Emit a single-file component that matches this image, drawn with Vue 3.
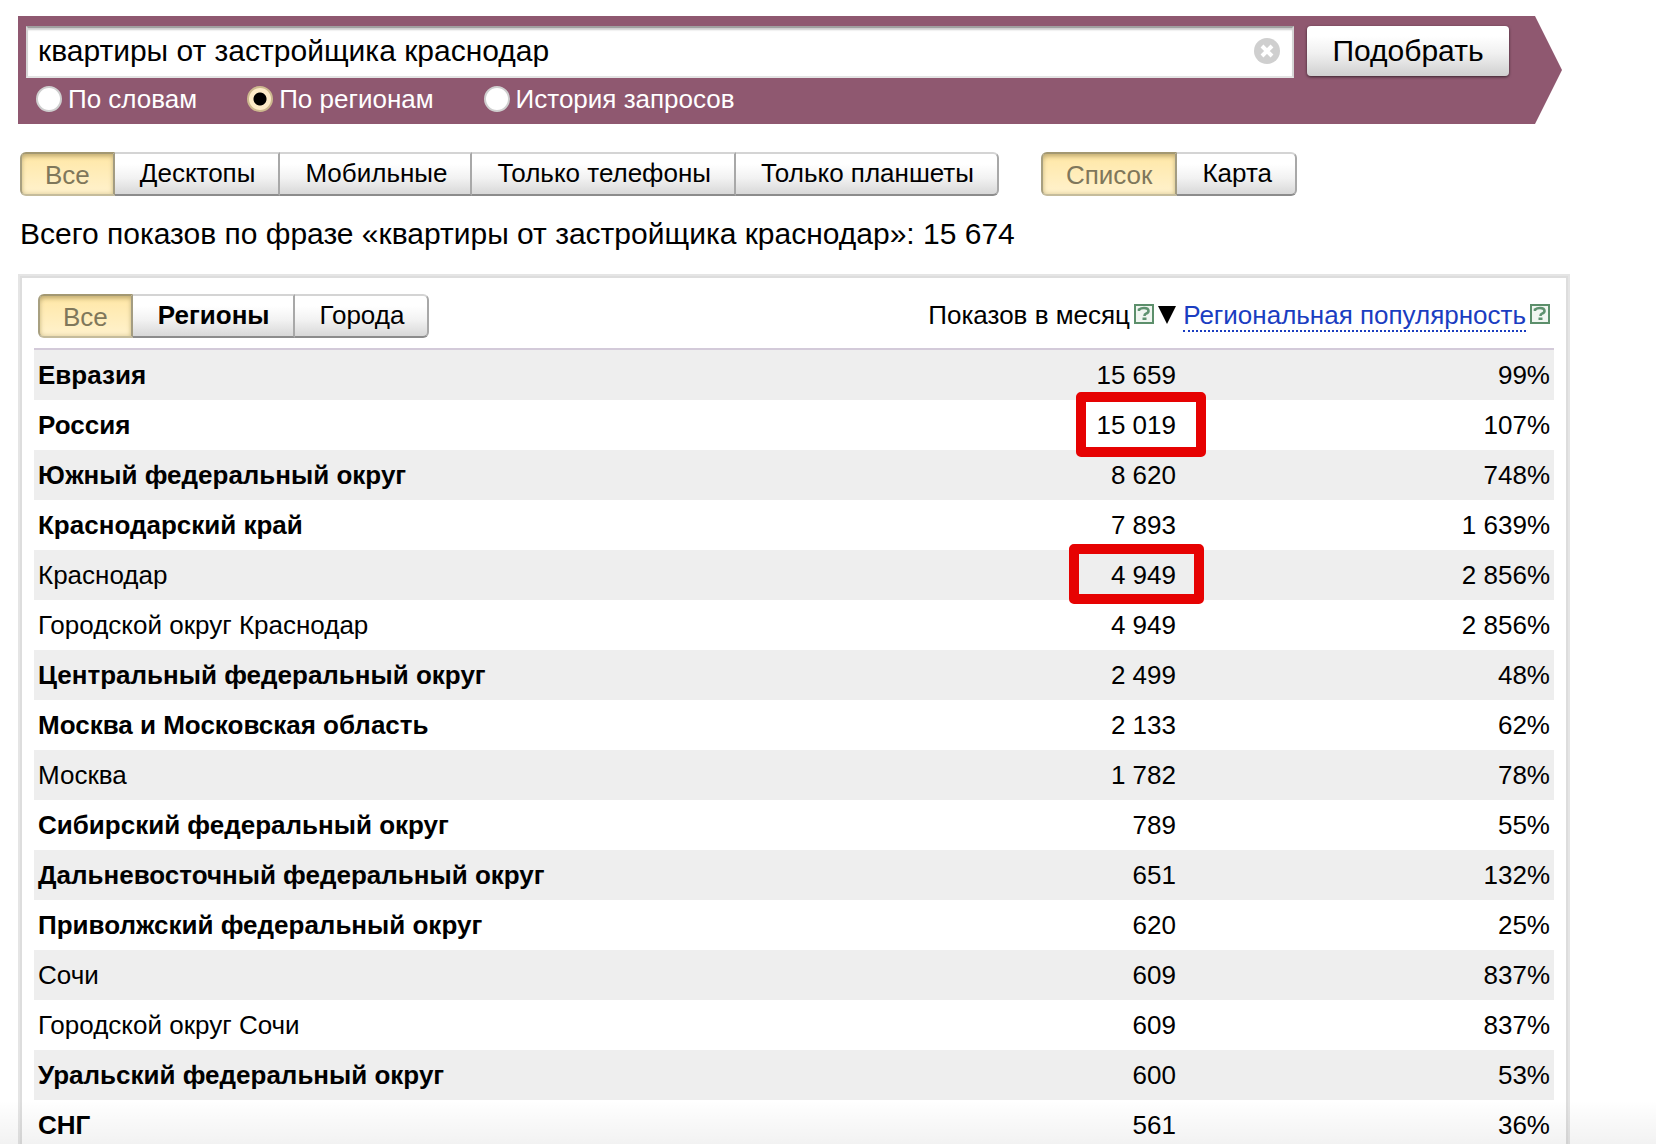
<script setup>
import { ref } from 'vue'

const query = ref('квартиры от застройщика краснодар')
const mode = ref('regions')
const modes = [
  { id: 'words', label: 'По словам' },
  { id: 'regions', label: 'По регионам' },
  { id: 'history', label: 'История запросов' },
]

const device = ref('Все')
const devices = ['Все', 'Десктопы', 'Мобильные', 'Только телефоны', 'Только планшеты']
const view = ref('Список')
const views = ['Список', 'Карта']
const scope = ref('Все')
const scopes = ['Все', 'Регионы', 'Города']

const rows = [
  { name: 'Евразия', shows: '15 659', share: '99%', bold: true },
  { name: 'Россия', shows: '15 019', share: '107%', bold: true, mark: 'mark-country' },
  { name: 'Южный федеральный округ', shows: '8 620', share: '748%', bold: true },
  { name: 'Краснодарский край', shows: '7 893', share: '1 639%', bold: true },
  { name: 'Краснодар', shows: '4 949', share: '2 856%', mark: 'mark-city' },
  { name: 'Городской округ Краснодар', shows: '4 949', share: '2 856%' },
  { name: 'Центральный федеральный округ', shows: '2 499', share: '48%', bold: true },
  { name: 'Москва и Московская область', shows: '2 133', share: '62%', bold: true },
  { name: 'Москва', shows: '1 782', share: '78%' },
  { name: 'Сибирский федеральный округ', shows: '789', share: '55%', bold: true },
  { name: 'Дальневосточный федеральный округ', shows: '651', share: '132%', bold: true },
  { name: 'Приволжский федеральный округ', shows: '620', share: '25%', bold: true },
  { name: 'Сочи', shows: '609', share: '837%' },
  { name: 'Городской округ Сочи', shows: '609', share: '837%' },
  { name: 'Уральский федеральный округ', shows: '600', share: '53%', bold: true },
  { name: 'СНГ', shows: '561', share: '36%', bold: true },
]
</script>

<template>
  <main class="page">
    <form class="search" @submit.prevent>
      <div class="search-line">
        <div class="field">
          <input v-model="query" class="query" type="text" aria-label="Запрос" />
          <button class="clear" type="button" aria-label="Очистить" @click="query = ''">
            <svg viewBox="0 0 26 26" width="26" height="26">
              <circle cx="13" cy="13" r="13" fill="#cfcfcf" />
              <path d="M8 8l10 10M18 8L8 18" stroke="#fff" stroke-width="4" />
            </svg>
          </button>
        </div>
        <button class="submit" type="submit">Подобрать</button>
      </div>
      <div class="modes">
        <label v-for="m in modes" :key="m.id" class="mode">
          <input v-model="mode" type="radio" name="mode" :value="m.id" />
          <span>{{ m.label }}</span>
        </label>
      </div>
    </form>

    <div class="filters">
      <div class="tabs">
        <button v-for="d in devices" :key="d" type="button" class="tab" :class="{ active: device === d }" @click="device = d">{{ d }}</button>
      </div>
      <div class="tabs">
        <button v-for="v in views" :key="v" type="button" class="tab" :class="{ active: view === v }" @click="view = v">{{ v }}</button>
      </div>
    </div>

    <h1 class="total">Всего показов по фразе «квартиры от застройщика краснодар»: 15 674</h1>

    <section class="panel">
      <table class="stats">
        <colgroup>
          <col />
          <col class="col-shows" />
          <col class="col-share" />
        </colgroup>
        <thead>
          <tr>
            <th>
              <div class="tabs">
                <button
                  v-for="s in scopes"
                  :key="s"
                  type="button"
                  class="tab"
                  :class="{ active: scope === s, strong: s === 'Регионы' }"
                  @click="scope = s"
                >{{ s }}</button>
              </div>
            </th>
            <th>
              <div class="head">
                <span>Показов в месяц</span>
                <svg class="help" viewBox="0 0 20 20" width="20" height="20">
                  <rect x="1" y="1" width="18" height="18" fill="#f1f6f1" stroke="#5c8f6b" stroke-width="2" />
                  <path d="M5 7V5.500Q7 4 10 4Q14.500 4 14.500 7Q14.500 8.700 12 9.600Q10.500 10.200 10.500 12" fill="none" stroke="#5f9270" stroke-width="2.600" />
                  <rect x="8.500" y="13.500" width="4" height="2.500" fill="#5f9270" />
                </svg>
                <svg class="arrow" viewBox="0 0 18 18" width="18" height="18">
                  <path d="M0 0H18L9 18Z" fill="#000" />
                </svg>
              </div>
            </th>
            <th>
              <div class="head">
                <a class="sort" href="#">Региональная популярность</a>
                <svg class="help" viewBox="0 0 20 20" width="20" height="20">
                  <rect x="1" y="1" width="18" height="18" fill="#f1f6f1" stroke="#5c8f6b" stroke-width="2" />
                  <path d="M5 7V5.500Q7 4 10 4Q14.500 4 14.500 7Q14.500 8.700 12 9.600Q10.500 10.200 10.500 12" fill="none" stroke="#5f9270" stroke-width="2.600" />
                  <rect x="8.500" y="13.500" width="4" height="2.500" fill="#5f9270" />
                </svg>
              </div>
            </th>
          </tr>
        </thead>
        <tbody>
          <tr v-for="r in rows" :key="r.name">
            <td :class="{ strong: r.bold }">{{ r.name }}</td>
            <td class="num">{{ r.shows }}<span v-if="r.mark" class="mark" :class="r.mark"></span></td>
            <td class="num">{{ r.share }}</td>
          </tr>
        </tbody>
      </table>
    </section>
    <div class="fade"></div>
  </main>
</template>

<style>
body {
  margin: 0;
  background: #fff;
}
</style>

<style scoped>
.page {
  position: relative;
  box-sizing: border-box;
  height: 100vh;
  overflow: hidden;
  padding: 16px 86px 0 18px;
  font: 26px/30px "Liberation Sans", Arial, sans-serif;
  color: #000;
}
button,
input {
  font: inherit;
  color: inherit;
  margin: 0;
}
button {
  cursor: pointer;
}
.search {
  box-sizing: border-box;
  height: 108px;
  margin-right: 8px;
  padding: 10px 53px 0 8px;
  background: #8f5870;
  clip-path: polygon(0 0, calc(100% - 27px) 0, 100% 50%, calc(100% - 27px) 100%, 0 100%);
}
.search-line {
  display: flex;
  gap: 13px;
}
.field {
  position: relative;
  flex: 1;
}
.query {
  display: block;
  box-sizing: border-box;
  width: 100%;
  height: 52px;
  padding: 0 50px 2px 10px;
  border: 2px solid;
  border-color: #a0a0a0 #d5d5d5 #e3e3e3;
  border-radius: 0;
  outline: 0;
  background: #fff;
  box-shadow: inset 0 3px 2px -1px #ccc;
  font-size: 30px;
}
.clear {
  position: absolute;
  top: 12px;
  right: 14px;
  width: 26px;
  height: 26px;
  padding: 0;
  border: 0;
  background: none;
}
.clear svg {
  display: block;
}
.submit {
  width: 202px;
  height: 50px;
  padding: 0;
  border: 0;
  border-radius: 4px;
  background: linear-gradient(#fff 20%, #f0f0f0 55%, #d0d0d0);
  box-shadow: 0 1px 3px rgba(0, 0, 0, 0.6);
  font-size: 30px;
}
.modes {
  display: flex;
  gap: 50px;
  padding: 6px 0 0 10px;
  color: #fff;
}
.mode {
  display: flex;
  align-items: center;
  gap: 6px;
}
.mode input {
  appearance: none;
  box-sizing: border-box;
  width: 26px;
  height: 26px;
  border: 2px solid #cfcfcf;
  border-radius: 50%;
  background: #fff;
}
.mode input:checked {
  border-color: #cdb98f;
  background: radial-gradient(circle, #000 6px, #fdebc8 7px);
}
.filters {
  display: flex;
  gap: 42px;
  padding: 28px 0 0 2px;
}
.tabs {
  display: flex;
}
.tab {
  box-sizing: border-box;
  height: 44px;
  padding: 0 23px 2px 25px;
  border: 2px solid;
  border-color: #d4d4d4 #a8a8a8 #8c8c8c;
  border-left: 0;
  background: linear-gradient(#fff 25%, #f2f2f2 60%, #d8d8d8);
  line-height: 38px;
  white-space: nowrap;
}
.tab:first-child {
  border-left: 2px solid #a8a8a8;
  border-radius: 6px 0 0 6px;
}
.tab:last-child {
  border-radius: 0 6px 6px 0;
}
.tab.active {
  padding: 2px 23px 0;
  border-color: #a39872 #a39c82 #c5bc9c #a8a080;
  background: linear-gradient(#ffe7a6, #fff2cd);
  box-shadow: inset 0 4px 5px -2px #c2ac72, inset 0 0 5px #d8c793;
  color: #7f775b;
}
.strong {
  font-weight: bold;
}
.total {
  margin: 20px 0 0 2px;
  font-size: 30px;
  line-height: 36px;
  font-weight: normal;
}
.panel {
  margin-top: 22px;
  padding: 14px 14px 20px;
  border: 2px solid #e5e5e5;
  outline: 2px solid #ddd;
  outline-offset: -4px;
  box-sizing: border-box;
}
.stats {
  width: 100%;
  table-layout: fixed;
  border-collapse: separate;
  border-spacing: 0;
}
.col-shows {
  width: 270px;
}
.col-share {
  width: 374px;
}
th {
  height: 54px;
  padding: 4px 4px 0;
  box-sizing: content-box;
  border-bottom: 2px solid #d3cad9;
  font-weight: normal;
  text-align: left;
  vertical-align: top;
}
.head {
  display: flex;
  justify-content: flex-end;
  gap: 4px;
  padding-top: 6px;
  white-space: nowrap;
}
.help {
  flex: none;
  margin-top: 4px;
}
.arrow {
  flex: none;
  margin-top: 6px;
}
.sort {
  height: 30px;
  border-bottom: 2px dotted #1a3dc1;
  color: #1a3dc1;
  text-decoration: none;
}
td {
  height: 50px;
  padding: 0 4px 0;
  white-space: nowrap;
}
tbody tr:nth-child(odd) td {
  background: #eee;
}
.num {
  position: relative;
  text-align: right;
}
.mark {
  position: absolute;
  z-index: 1;
  box-sizing: border-box;
  border: 10px solid #e60202;
  border-radius: 5px;
}
.mark-country {
  top: -8px;
  bottom: -7px;
  right: -26px;
  width: 130px;
}
.mark-city {
  top: -6px;
  bottom: -4px;
  right: -24px;
  width: 135px;
}
.fade {
  position: absolute;
  left: 0;
  right: 0;
  bottom: 0;
  height: 44px;
  background: linear-gradient(rgba(0, 0, 0, 0), rgba(0, 0, 0, 0.05));
  pointer-events: none;
}
</style>
